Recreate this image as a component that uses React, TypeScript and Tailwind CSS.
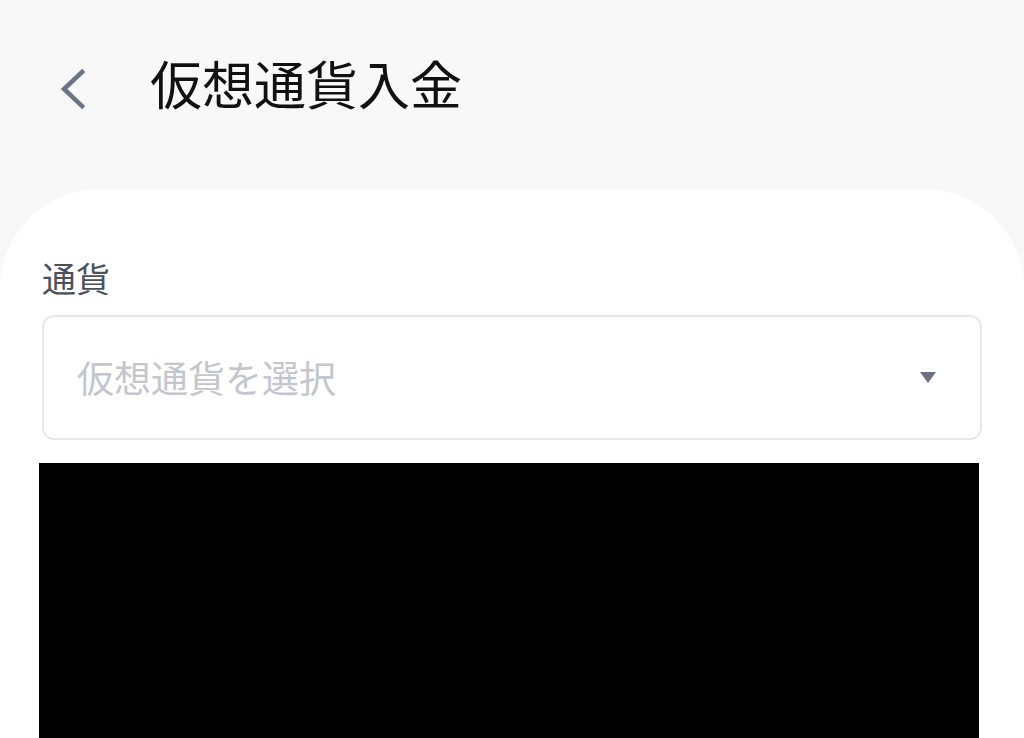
export default function App() {
  const font = { fontFamily: '"Noto Sans CJK JP", "Noto Sans", sans-serif' };
  return (
    <main className="w-[1024px] h-[738px] overflow-hidden bg-[#f8f8f8] flex flex-col" style={font}>
      <header className="h-[189px] shrink-0 flex items-start pt-[48px] pl-[58px]">
        <svg width="30" height="40" viewBox="0 0 30 40" className="mt-[21px]">
          <path d="M24 3 L6 20 L24 37" stroke="#6b7585" strokeWidth="4.5" fill="none" strokeLinecap="square" />
        </svg>
        <h1 className="ml-[62px] text-[52px] leading-[70px] text-[#111111]">仮想通貨入金</h1>
      </header>
      <section className="flex-1 min-h-0 bg-white rounded-t-[100px] px-[42px] pt-[66px]">
        <label className="block text-[34px] leading-[46px] text-[#4b5059]">通貨</label>
        <div className="mt-[14px] h-[125px] w-[940px] border-2 border-[#e6e8ec] rounded-[12px] flex items-center justify-between pl-[33px] pr-[44px]">
          <span className="text-[37px] text-[#c3c6cd]">仮想通貨を選択</span>
          <svg width="16" height="11" viewBox="0 0 16 11">
            <path d="M0 0 H16 L8 11 Z" fill="#6b7280" strokeLinejoin="round" />
          </svg>
        </div>
        <div className="mt-[23px] -ml-[3px] w-[940px] h-[300px] bg-black" />
      </section>
    </main>
  );
}
